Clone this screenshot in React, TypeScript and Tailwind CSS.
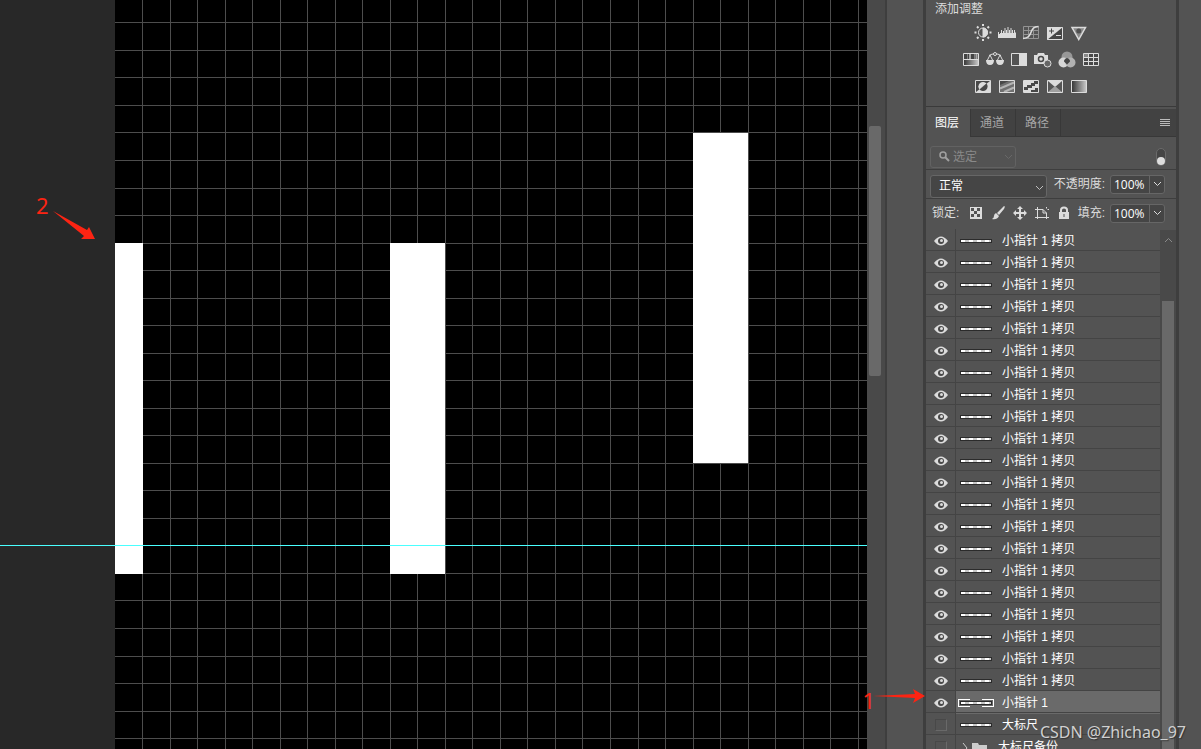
import { clsx } from "clsx";
import type { ReactNode } from "react";

type Layer = {
    id: number;
    name: string;
    visible: boolean;
    selected?: boolean;
    folder?: boolean;
};

const layers: Layer[] = [
    ...Array.from({ length: 21 }, (_, i) => ({
        id: i,
        name: "小指针 1 拷贝",
        visible: true,
    })),
    { id: 21, name: "小指针 1", visible: true, selected: true },
    { id: 22, name: "大标尺", visible: false },
    { id: 23, name: "大标尺备份", visible: false, folder: true },
];

const GRID = 27.53;

const gridLines = (count: number, offset: number) =>
    Array.from({ length: count }, (_, i) => Math.floor(offset + i * GRID));

const Canvas = () => (
    <main className="relative flex min-w-0 flex-1 overflow-hidden bg-[#282828]">
        <svg className="ml-[115px] h-full min-w-0 flex-1 bg-black" shapeRendering="crispEdges">
            <g fill="#4d4d4d">
                {gridLines(80, 27.5).map((x) => (
                    <rect key={x} x={x} y="0" width="1" height="100%" />
                ))}
                {gridLines(60, 22.85).map((y) => (
                    <rect key={y} x="0" y={y} width="100%" height="1" />
                ))}
            </g>
            <g fill="#fff">
                <rect x="0" y="243" width="28" height="331" />
                <rect x="275" y="243" width="55" height="331" />
                <rect x="578" y="133" width="55" height="330" />
            </g>
        </svg>
        <div className="absolute inset-x-0 top-[545px] h-px bg-[#4affff]" />
        <span className="absolute left-[36px] top-[191px] font-['Noto_Sans'] text-[22px] leading-7 text-[#fc2413]">
            2
        </span>
        <svg className="absolute left-[53px] top-[211px]" width="44" height="30" fill="#fc2413">
            <path d="M0 0 34 19 36 16 42 28 28 28 31 25Z" />
        </svg>
    </main>
);

const Glyph = ({ children }: { children: ReactNode }) => (
    <svg width="18" height="18" viewBox="0 0 18 18" fill="none" stroke="#dcdcdc" aria-hidden="true">
        {children}
    </svg>
);

const adjustments: { label: string; art: ReactNode }[][] = [
    [
        {
            label: "亮度/对比度",
            art: (
                <>
                    <circle cx="9" cy="9.5" r="4.5" />
                    <path d="M9 5a4.5 4.5 0 0 1 0 9Z" fill="#dcdcdc" />
                    <path
                        d="M9 1v2M9 16v2M0.500 9.500h2M15.500 9.500h2M3 3.500l1.500 1.500M13.500 14l1.500 1.500M3 15.500l1.500-1.500M13.500 5l1.500-1.500"
                        strokeWidth="2"
                    />
                </>
            ),
        },
        {
            label: "色阶",
            art: (
                <path
                    d="M0 15V9h1v2h1v-1h1V7h1v3h1V8h1v2h.500V5h1v5H8V7h1v3h.500V4h1v6h.500V7h1v3h.500V5h1v5h.500V7h1v3h1V7h1v3h.500V9h1v6Z"
                    fill="#dcdcdc"
                    stroke="none"
                />
            ),
        },
        {
            label: "曲线",
            art: (
                <>
                    <path d="M1.5 3.5h15v12h-15ZM6.5 3v12M11.5 3v12M1 7.5h15M1 11.5h15" stroke="#939393" />
                    <path d="M1 15.5c11 0 5-12 15.5-12" strokeWidth="1.5" />
                </>
            ),
        },
        {
            label: "曝光度",
            art: (
                <>
                    <path d="M1.5 4.5h15v12h-15Z" fill="#444" />
                    <path d="M1 4h16L1 17Z" fill="#dcdcdc" stroke="none" />
                    <path d="M3 8h5M5.5 5.5v5" stroke="#444" />
                    <path d="M10 12.5h5" />
                </>
            ),
        },
        {
            label: "自然饱和度",
            art: (
                <>
                    <path d="M2 4.500h13.500L8.750 16.500Z" fill="#8a8a8a" strokeWidth="1.5" />
                    <circle cx="8.750" cy="8" r="2.5" fill="#505050" stroke="none" />
                </>
            ),
        },
    ],
    [
        {
            label: "色相/饱和度",
            art: (
                <>
                    <path d="M1.5 3.5h15v12h-15Z" fill="url(#ramp)" />
                    <path d="M2 4h14v5H2Z" fill="#444" stroke="none" />
                    <path d="M5.500 4v5M12.500 4v5" stroke="#808080" />
                    <path d="M8 4v5M14.500 4v5" stroke="#a8a8a8" strokeWidth="2" />
                    <path d="M1 9.5h16" />
                </>
            ),
        },
        {
            label: "色彩平衡",
            art: (
                <>
                    <path d="M3 5.5Q6 3.5 9 4q3-.5 6 1.5M4 5 1 11M4 5l3 6M14 5l-3 6M14 5l3 6" />
                    <circle cx="9" cy="4" r="1.5" fill="#505050" />
                    <path d="M0 10h8q0 5-4 5t-4-5ZM10 10h8q0 5-4 5t-4-5Z" fill="#dcdcdc" stroke="none" />
                </>
            ),
        },
        {
            label: "黑白",
            art: (
                <>
                    <path d="M1.5 3.5h15v12h-15Z" />
                    <path d="M9 3h8v13H9Z" fill="#dcdcdc" stroke="none" />
                </>
            ),
        },
        {
            label: "照片滤镜",
            art: (
                <>
                    <path d="M0 5h3l1-2h6l1 2h3v9H0Z" fill="#dcdcdc" stroke="none" />
                    <circle cx="7" cy="9" r="2.5" stroke="#484848" strokeWidth="1.5" />
                    <circle cx="13.5" cy="13.5" r="3.5" fill="#666" />
                </>
            ),
        },
        {
            label: "通道混合器",
            art: (
                <g stroke="none">
                    <circle cx="9" cy="7" r="5.5" fill="#979797" />
                    <circle cx="5.500" cy="12.500" r="5" fill="#d6d6d6" />
                    <circle cx="12.500" cy="12.500" r="5" fill="#b2b2b2" />
                    <path d="M9 8q3 1 3 3.500l-3 3-3-3Q6 9 9 8Z" fill="#444" />
                </g>
            ),
        },
        {
            label: "颜色查找",
            art: (
                <>
                    <path d="M2 4h14v12H2Z" fill="#484848" stroke="none" />
                    <path d="M2 4h5v4H2Z" fill="#888" stroke="none" />
                    <path d="M1.5 3.5h15v12h-15ZM6.5 3v13M11.5 3v13M1 7.5h15M1 11.5h15" />
                </>
            ),
        },
    ],
    [
        {
            label: "反相",
            art: (
                <>
                    <path d="M2 4h14v11H2Z" fill="#484848" stroke="none" />
                    <path d="M16 4v11H2Z" fill="#dcdcdc" stroke="none" />
                    <path d="M5.500 12.500a4.500 4.500 0 0 1 7-6Z" fill="#dcdcdc" stroke="none" />
                    <path d="M5.500 12.500a4.500 4.500 0 0 0 7-6Z" fill="#484848" stroke="none" />
                    <path d="M1.5 3.5h15v12h-15Z" />
                </>
            ),
        },
        {
            label: "色调分离",
            art: (
                <>
                    <path d="M2 4h14v11H2Z" fill="#707070" stroke="none" />
                    <path d="M2 4h9L2 8Z" fill="#484848" stroke="none" />
                    <path d="M2 11.500 16 5.500M6 15l10-4.500" stroke="#b4b4b4" strokeWidth="2" />
                    <path d="M1.5 3.5h15v12h-15Z" />
                </>
            ),
        },
        {
            label: "阈值",
            art: (
                <>
                    <path d="M2 4h14v11H2Z" fill="#dcdcdc" stroke="none" />
                    <path d="M2 10h3V8h4V6h3V4h4v3h-3v2h-3v2H6v2H2ZM9 15v-2h4v-2h3v4Z" fill="#484848" stroke="none" />
                    <path d="M1.5 3.5h15v12h-15Z" />
                </>
            ),
        },
        {
            label: "可选颜色",
            art: (
                <>
                    <path d="M2 4h14v11H2Z" fill="#555" stroke="none" />
                    <path d="M2 4h14l-7 6Z" fill="#dcdcdc" stroke="none" />
                    <path d="m2 15 7-6 7 6Z" fill="#a0a0a0" stroke="none" />
                    <path d="M1.5 3.5h15v12h-15Z" />
                </>
            ),
        },
        {
            label: "渐变映射",
            art: <path d="M1.5 3.5h15v12h-15Z" fill="url(#ramp)" />,
        },
    ],
];

const AdjustmentsPanel = () => (
    <section className="h-[107px] shrink-0 overflow-hidden border-b border-[#3a3a3a] pl-[9px]">
        <h2 className="h-[23px] text-[12px] leading-[18px]">添加调整</h2>
        <div className="flex w-[191px] flex-col gap-[9px]">
            {adjustments.map((row, i) => (
                <div key={i} className="flex justify-center gap-[6px]">
                    {row.map((item) => (
                        <button key={item.label} type="button" aria-label={item.label} className="h-[18px]">
                            <Glyph>{item.art}</Glyph>
                        </button>
                    ))}
                </div>
            ))}
        </div>
    </section>
);

const Chevron = ({ className }: { className?: string }) => (
    <svg
        width="9"
        height="6"
        viewBox="0 0 9 6"
        fill="none"
        stroke="currentColor"
        className={className}
        aria-hidden="true"
    >
        <path d="m1 1 3.5 3.500L8 1" />
    </svg>
);

const PercentField = ({ label }: { label: string }) => (
    <label className="flex items-center">
        <span className="w-[52px] whitespace-nowrap text-right">{label}</span>
        <span className="ml-[5px] flex h-[19px] w-[55px] items-center rounded-[3px] border border-[#666] bg-[#454545]">
            <input
                defaultValue="100%"
                className="h-full w-[38px] bg-transparent pl-[3px] font-['Open_Sans'] text-[12px] text-white outline-none"
            />
            <span className="flex h-full flex-1 items-center justify-center border-l border-[#666]">
                <Chevron />
            </span>
        </span>
    </label>
);

const locks: { label: string; art: ReactNode }[] = [
    {
        label: "锁定透明像素",
        art: (
            <path
                d="M1 1h12v12H1ZM2 2v3h3V2ZM8 2v3h3V2ZM5 5v3h3V5ZM2 8v3h3V8ZM8 8v3h3V8Z"
                fillRule="evenodd"
            />
        ),
    },
    { label: "锁定图像像素", art: <path d="M13 0q1.500 0 0 3L8 9 6 7ZM5 7l3 3q-2 4-7 3 2-1 2-3 0-2 2-3Z" /> },
    {
        label: "锁定位置",
        art: <path d="m7 0 3 3H8v3h3V4l3 3-3 3V8H8v3h2l-3 3-3-3h2V8H3v2L0 7l3-3v2h3V3H4Z" />,
    },
    {
        label: "防止自动嵌套",
        art: (
            <path
                d="M2.5 1v12M0 3.5h8M0 11.5h14M11.5 7v6M8 3.5l3.5 3.5H8ZM11.500 1v1.500M12.500 3.500H14"
                fill="none"
                stroke="currentColor"
            />
        ),
    },
    {
        label: "锁定全部",
        art: (
            <>
                <path d="M2 6h10v7H2Z" />
                <path d="M4 7V4q0-2.500 3-2.500T10 4v3" fill="none" stroke="currentColor" strokeWidth="2" />
                <path d="M6.5 8h1v3h-1Z" fill="#535353" />
            </>
        ),
    },
];

const LayerControls = () => (
    <>
        <div className="flex h-[33px] items-center justify-between border-b border-[#3e3e3e] pl-1 pr-[10px] pt-[7px]">
            <div className="flex h-[22px] w-[86px] items-center rounded-[3px] border border-[#626262] pl-2 text-[#898989]">
                <svg width="11" height="11" fill="none" stroke="#a0a0a0" aria-hidden="true">
                    <circle cx="4" cy="4" r="3" strokeWidth="1.5" />
                    <path d="m6 6 4 4" strokeWidth="2" />
                </svg>
                <button type="button" className="ml-[3px] flex flex-1 items-center justify-between pr-[2px]">
                    选定
                    <Chevron className="text-[#686868]" />
                </button>
            </div>
            <button
                type="button"
                aria-label="图层滤镜开关"
                className="flex h-[18px] w-[10px] items-end rounded-full border border-[#6a6a6a] bg-[#454545]"
            >
                <span className="size-2 rounded-full bg-[#dedede]" />
            </button>
        </div>
        <div className="flex h-[29px] items-center border-b border-[#3e3e3e] pl-1">
            <div className="relative mt-[4px] h-[23px] w-[117px] text-white">
                <select
                    aria-label="混合模式"
                    className="h-full w-full appearance-none rounded-[3px] border border-[#666] bg-[#454545] pl-2"
                >
                    <option>正常</option>
                </select>
                <Chevron className="absolute right-[3px] top-[10px] text-[#c0c0c0]" />
            </div>
            <div className="ml-[6px]">
                <PercentField label="不透明度:" />
            </div>
        </div>
        <div className="flex h-[30px] items-center pb-[2px] pl-[6px]">
            <span className="w-[37px]">锁定:</span>
            <div className="flex gap-2">
                {locks.map((lock) => (
                    <button key={lock.label} type="button" aria-label={lock.label}>
                        <svg width="14" height="14" fill="currentColor" aria-hidden="true">
                            {lock.art}
                        </svg>
                    </button>
                ))}
            </div>
            <div className="-ml-[18px]">
                <PercentField label="填充:" />
            </div>
        </div>
    </>
);

const Thumb = ({ selected }: { selected?: boolean }) => (
    <svg width="36" height="8" shapeRendering="crispEdges" aria-hidden="true">
        <path d="M2 2h32v4H2Z" fill="#2b2b2b" />
        <path d="M3 3h30v2H3Z" fill="#fff" />
        <path d="M7 3h4v2H7ZM15 3h4v2h-4ZM23 3h4v2h-4ZM31 3h2v2h-2Z" fill="#c8c8c8" />
        {selected && <path d="M12 .5H.5v7H12M24 .5h11.5v7H24" fill="none" stroke="#fff" />}
    </svg>
);

const LayerRow = ({ layer }: { layer: Layer }) => (
    <li className="flex h-[22px] shrink-0">
        <button
            type="button"
            aria-label="可见性"
            className="flex w-[30px] items-center justify-center border-b border-r border-[#444] pl-px pt-[3px]"
        >
            {layer.visible ? (
                <svg width="14" height="10" aria-hidden="true">
                    <path d="M0 5q7-9 14 0-7 9-14 0Z" fill="#dcdcdc" />
                    <circle cx="7" cy="5" r="3" fill="#484848" />
                    <circle cx="7.5" cy="4.5" r="1.5" fill="#dcdcdc" />
                </svg>
            ) : (
                <span className="size-3 border border-b-[#696969] border-l-[#484848] border-r-[#696969] border-t-[#484848]" />
            )}
        </button>
        <div
            className={clsx(
                "flex flex-1 items-center border-b border-[#444] pl-[2px] pt-[2px] text-white",
                layer.selected && "bg-[#6a6a6a] shadow-[0_1px_0_#6a6a6a]",
            )}
        >
            {layer.folder ? (
                <svg width="36" height="12" aria-hidden="true">
                    <path d="m5 2 4 5-4 5" fill="none" stroke="#ccc" />
                    <path d="M14 2h6l1 2h8v8H14Z" fill="#ccc" />
                </svg>
            ) : (
                <Thumb selected={layer.selected} />
            )}
            <span className={layer.folder ? "ml-1" : "ml-2"}>{layer.name}</span>
        </div>
    </li>
);

const tabs = ["图层", "通道", "路径"];

const LayersPanel = () => (
    <section className="mt-[2px] flex min-h-0 flex-1 flex-col">
        <div className="flex h-7 shrink-0 bg-[#424242]" role="tablist">
            {tabs.map((tab, i) => (
                <button
                    key={tab}
                    type="button"
                    role="tab"
                    aria-selected={i === 0}
                    className={clsx(
                        "w-[45px] border-r border-[#383838] pr-[2px] text-[12px]",
                        i === 0 ? "bg-[#535353] text-white" : "border-b text-[#a6a6a6]",
                    )}
                >
                    {tab}
                </button>
            ))}
            <div className="flex flex-1 items-center justify-end border-b border-[#383838] pr-[6px]">
                <button type="button" aria-label="面板菜单">
                    <svg width="10" height="8" stroke="#bbb" aria-hidden="true">
                        <path d="M0 .5h10M0 2.5h10M0 4.5h10M0 6.5h10" />
                    </svg>
                </button>
            </div>
        </div>
        <LayerControls />
        <div className="flex min-h-0 flex-1 overflow-hidden">
            <ul className="flex min-w-0 flex-1 flex-col overflow-hidden">
                {layers.map((layer) => (
                    <LayerRow key={layer.id} layer={layer} />
                ))}
            </ul>
            <div className="mt-px flex w-4 flex-col items-center bg-[#494949]">
                <Chevron className="mt-[7px] rotate-180 text-[#8a8a8a]" />
                <div className="mt-[58px] w-3 flex-1 bg-[#696969]" />
            </div>
        </div>
    </section>
);

const App = () => (
    <div className="relative flex h-screen overflow-hidden bg-[#535353] font-['Liberation_Sans','Noto_Sans_CJK_SC',sans-serif] text-[12px] text-[#dcdcdc]">
        <svg width="0" height="0" className="absolute" aria-hidden="true">
            <linearGradient id="ramp">
                <stop stopColor="#333" />
                <stop offset="1" stopColor="#ccc" />
            </linearGradient>
        </svg>
        <Canvas />
        <div className="w-[18px] shrink-0 bg-[#494949] pl-[2px] pt-[126px]">
            <div className="h-[250px] w-3 rounded-[2px] bg-[#696969]" />
        </div>
        <div className="w-[41px] shrink-0 border-l-2 border-r-[3px] border-[#3e3e3e]" />
        <aside className="flex w-[250px] shrink-0 flex-col">
            <AdjustmentsPanel />
            <LayersPanel />
        </aside>
        <div className="w-[25px] shrink-0 border-l-[3px] border-[#3e3e3e]" />

        <span className="absolute right-[326px] top-[686px] font-['Noto_Sans'] text-[22px] leading-7 text-[#fc2413]">
            1
        </span>
        <svg className="absolute right-[276px] top-[689px]" width="52" height="15" fill="#fc2413" aria-hidden="true">
            <path d="M0 7 42 5 40 0 52 7 40 14 42 9Z" />
        </svg>
        <span className="absolute bottom-[5px] right-[15px] font-['Noto_Sans'] text-[16px] leading-6 text-[#d0d0d0] [text-shadow:1px_1px_1px_#333]">
            CSDN @Zhichao_97
        </span>
    </div>
);

export default App;
